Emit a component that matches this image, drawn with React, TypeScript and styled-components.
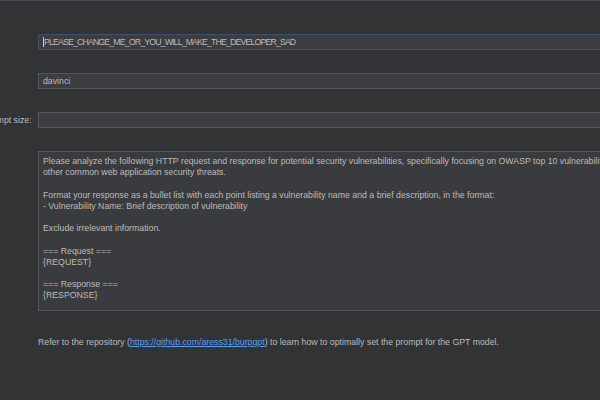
import styled, { createGlobalStyle } from 'styled-components';

const GlobalStyle = createGlobalStyle`
  html, body {
    margin: 0;
    padding: 0;
    background: #323335;
    overflow: hidden;
  }
  body {
    font-family: 'Liberation Sans', Arial, sans-serif;
    font-size: 8.75px;
    color: #bbbbbb;
  }
`;

const PROMPT = `Please analyze the following HTTP request and response for potential security vulnerabilities, specifically focusing on OWASP top 10 vulnerabilities such as SQL injection, XSS, CSRF, and
other common web application security threats.

Format your response as a bullet list with each point listing a vulnerability name and a brief description, in the format:
- Vulnerability Name: Brief description of vulnerability

Exclude irrelevant information.

=== Request ===
{REQUEST}

=== Response ===
{RESPONSE}`;

const App = () => {
  return (
    <>
      <GlobalStyle />
      <Page>
        <Form>
          <Row>
            <Label>API key:</Label>
            <Field focused condensed>
              <Caret />
              PLEASE_CHANGE_ME_OR_YOU_WILL_MAKE_THE_DEVELOPER_SAD
            </Field>
          </Row>
          <Row>
            <Label>Model:</Label>
            <Field>davinci</Field>
          </Row>
          <Row>
            <Label>Max prompt size:</Label>
            <Field />
          </Row>
          <Row>
            <Label>Prompt:</Label>
            <PromptArea>{PROMPT}</PromptArea>
          </Row>
        </Form>
        <Hint>
          Refer to the repository (
          <Link href="#">https://github.com/aress31/burpgpt</Link>) to learn how
          to optimally set the prompt for the GPT model.
        </Hint>
      </Page>
    </>
  );
};

const Page = styled.div`
  width: 600px;
  height: 400px;
  border-top: 1px solid #46474a;
  box-sizing: border-box;
  overflow: hidden;
`;

const Form = styled.div`
  display: flex;
  flex-direction: column;
  gap: 23px;
  margin-left: -35px;
  padding-top: 33px;
  width: 760px;
`;

const Row = styled.div`
  display: grid;
  grid-template-columns: 67px 1fr;
  column-gap: 6px;
  align-items: center;
`;

const Label = styled.div`
  white-space: nowrap;
  text-align: left;
  align-self: start;
  line-height: 16px;
`;

const Field = styled.div<{ focused?: boolean; condensed?: boolean }>`
  height: 16px;
  box-sizing: border-box;
  background: #3c3d40;
  border: 1px solid ${(p) => (p.focused ? '#3f4f6b' : '#56575a')};
  padding: 0 4px;
  line-height: 14px;
  letter-spacing: ${(p) => (p.condensed ? '-0.85px' : 'normal')};
  white-space: nowrap;
  overflow: hidden;
  display: flex;
  align-items: center;
`;

const Caret = styled.span`
  display: inline-block;
  width: 1px;
  height: 10px;
  background: #c8c8c8;
  margin-right: 0;
`;

const PromptArea = styled.div`
  height: 160px;
  box-sizing: border-box;
  background: #3a3b3e;
  border: 1px solid #56575a;
  padding: 4px 4px 3px;
  line-height: 11.2px;
  white-space: pre;
  overflow: hidden;
`;

const Hint = styled.div`
  margin: 26px 0 0 38px;
  white-space: nowrap;
  line-height: 11px;
`;

const Link = styled.a`
  color: #589df6;
  text-decoration: underline;
`;

export default App;
